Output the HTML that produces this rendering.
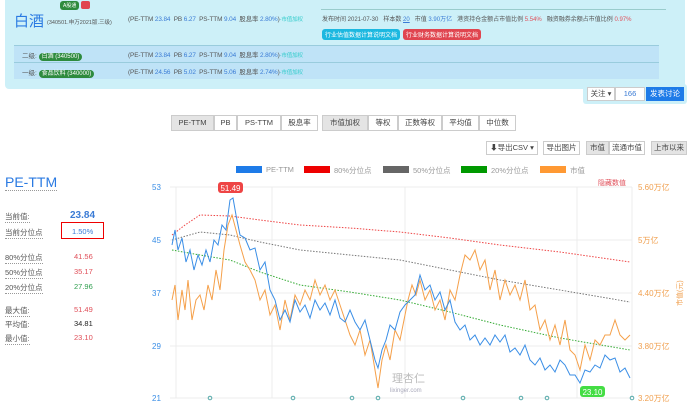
<!DOCTYPE html>
<html><head><meta charset="utf-8"><style>
*{box-sizing:border-box;margin:0;padding:0}
body{width:700px;height:407px;overflow:hidden;background:#fff;font-family:"Liberation Sans","Noto Sans CJK SC",sans-serif;font-size:7px;color:#555;position:relative}
.a{position:absolute;white-space:nowrap}
.b{color:#3a7bd5}.r{color:#e0505a}.g{color:#2e9e4e}
.btn{position:absolute;border:1px solid #ccc;background:#fff;height:14px;line-height:12px;font-size:7.5px;text-align:center;color:#444}
.lbl{border-bottom:1px dotted #999}
.row{font-size:6.4px;letter-spacing:-0.1px}
</style></head><body>
<div class="a" style="left:5px;top:0;width:680px;height:89px;background:#cdf0f8;border-radius:0 0 4px 4px"></div>
<div class="a" style="left:60px;top:1px;background:#2e8b3e;color:#fff;font-size:5px;padding:1px 3px;border-radius:3px">A股通</div>
<div class="a" style="left:81px;top:1px;background:#e0454f;width:9px;height:8px;border-radius:2px"></div>
<div class="a" style="left:14px;top:10px;font-size:15px;color:#2a7ae2">白酒</div>
<div class="a" style="left:47px;top:18px;font-size:5.5px">(340501.申万2021版.三级)</div>
<div class="a row" style="left:128px;top:14px">(PE-TTM <span class="b">23.84</span> &nbsp;PB <span class="b">6.27</span> &nbsp;PS-TTM <span class="b">9.04</span> &nbsp;股息率 <span class="b">2.80%</span>)<span style="color:#3cc;font-size:5.5px">-市值加权</span></div>
<div class="a" style="left:321px;top:9px;width:345px;border-top:1px solid #9cc"></div>
<div class="a" style="left:322px;top:14px;font-size:6px">发布时间 2021-07-30 &nbsp; 样本数 <span class="b" style="text-decoration:underline">20</span> &nbsp; 市值 <span class="b">3.90万亿</span> &nbsp; 港资持仓金额占市值比例 <span class="r">5.54%</span> &nbsp; 融资融券余额占市值比例 <span class="r">0.97%</span></div>
<div class="a" style="left:322px;top:29px;background:#1cb8e0;color:#fff;font-size:6px;padding:1px 3px;border-radius:3px">行业估值数据计算说明文档</div>
<div class="a" style="left:403px;top:29px;background:#e0454f;color:#fff;font-size:6px;padding:1px 3px;border-radius:3px">行业财务数据计算说明文档</div>
<div class="a" style="left:14px;top:45px;width:645px;height:34px;background:#bfe3f7;border-top:1px solid #9cd;"></div>
<div class="a" style="left:14px;top:62px;width:645px;border-top:1px solid #9cd"></div>
<div class="a" style="left:22px;top:50px;font-size:6.5px">二级: <span style="background:#2e8b3e;color:#fff;padding:1px 3px;border-radius:4px;font-size:6px">白酒 (340500)</span></div>
<div class="a" style="left:22px;top:67px;font-size:6.5px">一级: <span style="background:#2e8b3e;color:#fff;padding:1px 3px;border-radius:4px;font-size:6px">食品饮料 (340000)</span></div>
<div class="a row" style="left:128px;top:50px">(PE-TTM <span class="b">23.84</span> &nbsp;PB <span class="b">6.27</span> &nbsp;PS-TTM <span class="b">9.04</span> &nbsp;股息率 <span class="b">2.80%</span>)<span style="color:#3cc;font-size:5.5px">-市值加权</span></div>
<div class="a row" style="left:128px;top:67px">(PE-TTM <span class="b">24.56</span> &nbsp;PB <span class="b">5.02</span> &nbsp;PS-TTM <span class="b">5.06</span> &nbsp;股息率 <span class="b">2.74%</span>)<span style="color:#3cc;font-size:5.5px">-市值加权</span></div>
<div class="a" style="left:583px;top:84px;width:104px;height:20px;background:#cdf0f8;border-radius:3px"></div>
<div class="btn" style="left:587px;top:87px;width:28px;height:14px">关注 ▾</div>
<div class="btn" style="left:615px;top:87px;width:30px;height:14px;color:#3a7bd5">166</div>
<div class="btn" style="left:646px;top:87px;width:38px;height:14px;background:#1e7be8;color:#fff;border-color:#1e7be8">发表讨论</div>
<div class="btn" style="left:171px;top:115px;width:43px;height:16px;line-height:14px;background:#e4e4e4">PE-TTM</div>
<div class="btn" style="left:214px;top:115px;width:23px;height:16px;line-height:14px">PB</div>
<div class="btn" style="left:237px;top:115px;width:44px;height:16px;line-height:14px">PS-TTM</div>
<div class="btn" style="left:281px;top:115px;width:37px;height:16px;line-height:14px">股息率</div>
<div class="btn" style="left:322px;top:115px;width:46px;height:16px;line-height:14px;background:#e4e4e4">市值加权</div>
<div class="btn" style="left:368px;top:115px;width:30px;height:16px;line-height:14px">等权</div>
<div class="btn" style="left:398px;top:115px;width:44px;height:16px;line-height:14px">正数等权</div>
<div class="btn" style="left:442px;top:115px;width:37px;height:16px;line-height:14px">平均值</div>
<div class="btn" style="left:479px;top:115px;width:37px;height:16px;line-height:14px">中位数</div>
<div class="btn" style="left:486px;top:141px;width:52px">⬇导出CSV ▾</div>
<div class="btn" style="left:543px;top:141px;width:37px">导出图片</div>
<div class="btn" style="left:586px;top:141px;width:23px;background:#e4e4e4">市值</div>
<div class="btn" style="left:609px;top:141px;width:36px">流通市值</div>
<div class="btn" style="left:651px;top:141px;width:36px;background:#e4e4e4">上市以来</div>
<div class="a" style="left:236px;top:166px;width:26px;height:7px;background:#1e7be8"></div><div class="a" style="left:266px;top:165px;font-size:7.5px;color:#999">PE-TTM</div>
<div class="a" style="left:304px;top:166px;width:26px;height:7px;background:#e00"></div><div class="a" style="left:334px;top:165px;font-size:7.5px;color:#999">80%分位点</div>
<div class="a" style="left:383px;top:166px;width:26px;height:7px;background:#666"></div><div class="a" style="left:413px;top:165px;font-size:7.5px;color:#999">50%分位点</div>
<div class="a" style="left:461px;top:166px;width:26px;height:7px;background:#090"></div><div class="a" style="left:491px;top:165px;font-size:7.5px;color:#999">20%分位点</div>
<div class="a" style="left:540px;top:166px;width:26px;height:7px;background:#f93"></div><div class="a" style="left:570px;top:165px;font-size:7.5px;color:#999">市值</div>
<div class="a r" style="left:598px;top:178px;font-size:7px">隐藏数值</div>
<div class="a" style="left:5px;top:174px;font-size:14px;color:#2a7ae2;border-bottom:1px dotted #999">PE-TTM</div>
<div class="a lbl" style="left:5px;top:211px;font-size:7.5px">当前值:</div><div class="a b" style="left:70px;top:210px;font-size:10px;font-weight:bold">23.84</div>
<div class="a lbl" style="left:5px;top:227px;font-size:7.5px">当前分位点</div>
<div class="a" style="left:61px;top:222px;width:43px;height:17px;border:1.5px solid #e00"></div><div class="a b" style="left:72px;top:227px;font-size:7.5px">1.50%</div>
<div class="a lbl" style="left:5px;top:252px;font-size:7.5px">80%分位点</div><div class="a r" style="left:74px;top:252px;font-size:7.5px">41.56</div>
<div class="a lbl" style="left:5px;top:267px;font-size:7.5px">50%分位点</div><div class="a r" style="left:74px;top:267px;font-size:7.5px">35.17</div>
<div class="a lbl" style="left:5px;top:282px;font-size:7.5px">20%分位点</div><div class="a g" style="left:74px;top:282px;font-size:7.5px">27.96</div>
<div class="a lbl" style="left:5px;top:305px;font-size:7.5px">最大值:</div><div class="a r" style="left:74px;top:305px;font-size:7.5px">51.49</div>
<div class="a" style="left:5px;top:319px;font-size:7.5px">平均值:</div><div class="a" style="left:74px;top:319px;font-size:7.5px;color:#222">34.81</div>
<div class="a lbl" style="left:5px;top:333px;font-size:7.5px">最小值:</div><div class="a r" style="left:74px;top:333px;font-size:7.5px">23.10</div>
<svg class="a" style="left:0;top:0" width="700" height="407">
<g stroke="#ececec" stroke-width="1"><line x1="170" y1="187" x2="632" y2="187"/><line x1="170" y1="240" x2="632" y2="240"/><line x1="170" y1="293" x2="632" y2="293"/><line x1="170" y1="346" x2="632" y2="346"/><line x1="170" y1="398" x2="632" y2="398"/>
<line x1="176" y1="187" x2="176" y2="398"/><line x1="272" y1="187" x2="272" y2="398"/><line x1="405" y1="187" x2="405" y2="398"/><line x1="577" y1="187" x2="577" y2="398"/><line x1="632" y1="187" x2="632" y2="398"/></g>
<g font-size="8" fill="#3a8ee6" font-family="Liberation Sans"><text x="152" y="190">53</text><text x="152" y="243">45</text><text x="152" y="296">37</text><text x="152" y="349">29</text><text x="152" y="401">21</text></g>
<g font-size="8" fill="#f0a050" font-family="Liberation Sans,Noto Sans CJK SC"><text x="638" y="190">5.60万亿</text><text x="638" y="243">5万亿</text><text x="638" y="296">4.40万亿</text><text x="638" y="349">3.80万亿</text><text x="638" y="401">3.20万亿</text><text x="676" y="300" transform="rotate(-90 682 300)" font-size="7">市值(元)</text></g>
<polyline fill="none" stroke="#e44" stroke-width="1" stroke-dasharray="1.5,1.5" points="172,235 185,225 200,215 230,216 260,220 300,225 350,228 400,232 450,238 500,245 560,252 630,262"/>
<polyline fill="none" stroke="#777" stroke-width="1" stroke-dasharray="1.5,1.5" points="172,240 200,232 230,235 260,242 300,250 350,255 400,260 450,270 500,280 560,290 630,302"/>
<polyline fill="none" stroke="#3a3" stroke-width="1" stroke-dasharray="1.5,1.5" points="172,250 200,255 230,260 260,272 300,285 350,292 400,300 450,312 500,325 560,338 630,350"/>
<polyline fill="none" stroke="#f5a04a" stroke-width="1" points="172,300 175,285 178,320 182,290 185,310 188,280 192,320 196,300 200,295 204,310 208,285 212,300 216,270 220,290 224,250 228,225 232,215 236,230 240,245 245,262 250,270 255,280 260,300 265,290 270,315 275,305 280,330 285,300 290,320 295,295 300,305 305,290 310,300 315,280 320,295 325,285 330,300 335,290 340,305 345,320 350,335 355,345 360,330 365,355 370,340 375,370 378,388 382,360 386,345 390,360 395,330 400,340 404,320 408,300 412,285 416,295 420,280 425,300 430,290 435,310 440,300 445,320 450,290 455,300 460,275 465,255 470,260 475,250 480,270 485,260 490,290 495,270 500,300 505,280 510,295 515,285 520,300 525,280 530,310 535,305 540,330 545,320 550,340 555,325 560,345 565,320 570,350 575,355 580,370 585,345 590,360 595,340 600,345 605,335 610,335 615,320 620,335 625,340 630,335"/>
<polyline fill="none" stroke="#3a8ee6" stroke-width="1" points="172,245 175,230 178,250 182,238 186,262 190,250 194,270 198,255 202,265 206,250 210,262 214,240 218,245 222,225 226,230 230,200 233,198 236,215 240,235 245,238 250,250 255,248 260,270 265,262 270,290 275,300 280,320 285,310 290,322 295,300 300,312 305,305 310,318 315,300 320,310 325,303 330,315 335,300 340,318 345,322 350,310 355,322 360,330 365,320 370,340 375,360 378,368 382,350 386,340 390,325 395,330 400,312 405,305 410,300 415,295 420,275 425,290 430,285 435,300 440,292 445,310 450,300 455,322 460,330 465,325 470,340 475,335 480,345 485,338 490,345 495,335 500,342 505,335 510,352 515,348 520,355 525,345 530,360 535,365 540,358 545,370 550,365 555,372 560,360 565,365 570,375 575,375 580,383 585,370 590,372 595,365 600,368 605,355 610,360 615,358 620,372 625,368 630,378"/>
<rect x="218" y="182" width="25" height="11" rx="3" fill="#e44"/><text x="230.5" y="191" font-size="8" fill="#fff" text-anchor="middle" font-family="Liberation Sans">51.49</text>
<rect x="580" y="386" width="25" height="11" rx="3" fill="#4d4"/><text x="592.5" y="395" font-size="8" fill="#fff" text-anchor="middle" font-family="Liberation Sans">23.10</text>
<g fill="none" stroke="#5aa" stroke-width="1"><circle cx="210" cy="398" r="1.8"/><circle cx="293" cy="398" r="1.8"/><circle cx="352" cy="398" r="1.8"/><circle cx="378" cy="398" r="1.8"/><circle cx="463" cy="398" r="1.8"/><circle cx="521" cy="398" r="1.8"/><circle cx="547" cy="398" r="1.8"/><circle cx="632" cy="398" r="1.8"/></g>
<text x="392" y="382" font-size="11" fill="#bbb" font-family="Noto Sans CJK SC">理杏仁</text><text x="390" y="392" font-size="6" fill="#aab" font-family="Liberation Sans">lixinger.com</text>
</svg>
</body></html>
